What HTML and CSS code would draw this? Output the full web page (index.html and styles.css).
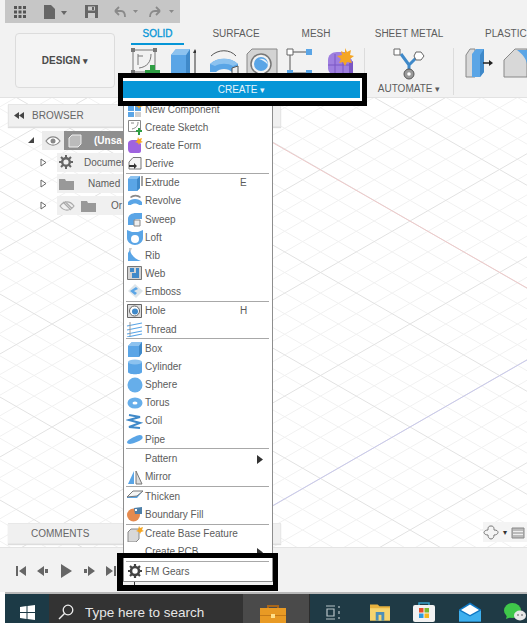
FILE: index.html
```html
<!DOCTYPE html>
<html lang="en">
<head>
<meta charset="utf-8">
<title>Fusion 360 Create menu</title>
<link rel="stylesheet" href="styles.css">
</head>
<body>
<div class="app">
  <header class="ribbon">
    <div class="quickbar">
      <svg class="qb-icon" width="16" height="14" viewBox="0 0 16 14"><path fill="#555" d="M2 1h3v3H2zM6.500 1h3v3h-3zM11 1h3v3h-3zM2 5.500h3v3H2zM6.500 5.500h3v3h-3zM11 5.500h3v3h-3zM2 10h3v3H2zM6.500 10h3v3h-3zM11 10h3v3h-3z"/></svg>
      <svg class="qb-icon qb-file" width="24" height="16" viewBox="0 0 24 16"><path fill="#666" d="M1 1h7l4 4v10H1z"/><path fill="#666" d="M18 7h6l-3 4z"/></svg>
      <svg class="qb-icon qb-save" width="15" height="15" viewBox="0 0 15 15"><path fill="#666" d="M1 1h13v13H1z"/><path fill="#ccc" d="M4 2.500h7v4H4zM4 9h7v5H4z"/><path fill="#666" d="M8 3h2v3H8z"/></svg>
      <svg class="qb-icon qb-undo" width="26" height="14" viewBox="0 0 26 14"><path fill="none" stroke="#8a8a8a" stroke-width="1.800" d="M2 6l4-4M2 6l4 4M2 6h6c3 0 4 2 4 6"/><path fill="#8a8a8a" d="M20 5h5l-2.500 3z"/></svg>
      <svg class="qb-icon qb-redo" width="27" height="14" viewBox="0 0 27 14"><path fill="none" stroke="#8a8a8a" stroke-width="1.800" d="M12 6L8 2M12 6l-4 4M12 6H7c-3 0-5 2-5 6"/><path fill="#8a8a8a" d="M21 5h5l-2.500 3z"/></svg>
    </div>
    <div class="ribbon-body">
      <div class="design-btn">DESIGN <span class="caret">▾</span></div>
      <div class="ribbon-main">
        <nav class="tabs">
          <span class="tab tab-solid">SOLID</span>
          <span class="tab tab-surface">SURFACE</span>
          <span class="tab tab-mesh">MESH</span>
          <span class="tab tab-sheet">SHEET METAL</span>
          <span class="tab tab-plastic">PLASTIC</span>
        </nav>
        <div class="tools">
          <svg class="tool t-sketch" width="30" height="30" viewBox="0 0 30 30"><path fill="none" stroke="#777" d="M2 2h22v22H2z"/><path fill="none" stroke="#777" d="M7 8h5M20 6c0 8-4 13-12 14M7 6v11"/><path fill="#777" d="M0 0h4v4H0zM22 0h4v4h-4zM0 22h4v4H0z"/><path fill="#2f9e44" d="M19 17h5v5h5v6h-5v5h-5v-5h-5v-6h5z"/></svg>
          <svg class="tool t-box" width="26" height="30" viewBox="0 0 26 30"><path fill="#5aa5e6" d="M1 7l5-6h14v24l-4 4H1z"/><path fill="#3f89c9" d="M16 7l4-6v24l-4 4z"/><path fill="#8cc2ef" d="M1 7l5-6h14l-4 6z"/><path stroke="#333" d="M25 4v22"/><path fill="#333" d="M25 1l2 4h-4z"/></svg>
          <svg class="tool t-rev" width="32" height="30" viewBox="0 0 32 30"><path fill="none" stroke="#555" d="M3 8c7-7 19-7 25 0"/><path fill="#5aa5e6" d="M2 16c7-7 21-7 28 0v8h-6c-4-4-12-4-16 0H2z"/><path fill="#8cc2ef" d="M2 16c7-7 21-7 28 0l-5 2c-5-3-13-3-18 0z"/><path fill="#eee" stroke="#555" d="M24 20l6-2v9l-6 2z"/></svg>
          <svg class="tool t-hole" width="32" height="30" viewBox="0 0 32 30"><path fill="#d3d3d3" stroke="#888" d="M1 6l5-5h25v26H1z"/><circle cx="15" cy="16" r="10" fill="#f2f2f2" stroke="#777" stroke-width="1.500"/><circle cx="15" cy="16" r="7" fill="#5aa5e6"/><path fill="#e8f2fa" d="M13 11a7 7 0 019 6c-3-4-6-5-9-6z"/></svg>
          <svg class="tool t-pts" width="28" height="30" viewBox="0 0 28 30"><path fill="none" stroke="#555" d="M7 4h14M4 7v17M7 25h14"/><path fill="#fff" stroke="#666" d="M1 1h6v6H1z"/><path fill="#5aa5e6" d="M20 1h6v6h-6zM1 22h6v6H1zM20 22h6v6h-6z"/></svg>
          <svg class="tool t-form" width="30" height="30" viewBox="0 0 30 30"><path fill="#9f7fe0" d="M3 12c0-5 4-8 9-8h8l7 8v14H8c-3 0-5-3-5-6z"/><path fill="none" stroke="#7a57c4" d="M3 17h22M10 6v22M18 6v22"/><path fill="#7a57c4" d="M24 15l4-2v12l-4 3z"/><path fill="#f5a623" d="M20 0l2 4 4-2-1 5 4 1-4 3 2 4-5-1-2 4-2-4-4 1 2-4-4-3 5-1-1-4 4 2z"/></svg>
          <span class="tool-div"></span>
          <div class="automate">
            <svg width="32" height="33" viewBox="0 0 32 33"><path fill="none" stroke="#3f89c9" stroke-width="3" d="M8 6l8 11 8-8M16 17v8"/><path fill="#fff" stroke="#666" d="M1 1h6v6H1z"/><path fill="#fff" stroke="#666" d="M23 4l5 0 3 4-3 4h-5l-2-4z"/><circle cx="16" cy="26" r="5" fill="#999" stroke="#555"/><circle cx="16" cy="26" r="1.800" fill="#fff"/></svg>
            <span class="auto-label">AUTOMATE <span class="caret">▾</span></span>
          </div>
          <span class="tool-div"></span>
          <svg class="tool t-plastic" width="28" height="30" viewBox="0 0 28 30"><path fill="#d8d8d8" stroke="#888" d="M1 29V7l4-6h5v28z"/><path fill="#5aa5e6" d="M7 29V6l4-5h8v23l-4 5z"/><path fill="#3f89c9" d="M15 7l4-6v23l-4 5z"/><path stroke="#222" stroke-width="1.500" d="M18 15h8"/><path fill="#222" d="M28 15l-4-3v6z"/></svg>
          <svg class="tool t-next" width="24" height="30" viewBox="0 0 24 30"><path fill="#d8d8d8" stroke="#888" d="M1 29V12L12 1h12v28z"/><path fill="#5aa5e6" d="M14 2h10v14c-1-6-5-10-10-14z"/></svg>
        </div>
      </div>
    </div>
  </header>

  <main class="canvas">
    <svg class="grid" viewBox="0 98 527 449" aria-hidden="true">
      <defs>
        <pattern id="minor" patternUnits="userSpaceOnUse" x="410" y="118" width="179" height="103">
          <path fill="none" stroke="#f1f1f1" stroke-width="1" d="M0 20.600L179 123.600M0 -82.400L179 20.600M0 41.200L179 144.200M0 -61.800L179 41.200M0 61.800L179 164.800M0 -41.200L179 61.800M0 82.400L179 185.400M0 -20.600L179 82.400M0 20.600L179 -82.400M0 123.600L179 20.600M0 41.200L179 -61.800M0 144.200L179 41.200M0 61.800L179 -41.200M0 164.800L179 61.800M0 82.400L179 -20.600M0 185.400L179 82.400"/>
        </pattern>
        <pattern id="major" patternUnits="userSpaceOnUse" x="410" y="118" width="179" height="103">
          <path fill="none" stroke="#e2e2e2" stroke-width="1" d="M0 0L179 103M0 103L179 0"/>
        </pattern>
      </defs>
      <rect x="0" y="98" width="527" height="449" fill="#fff"/>
      <rect x="0" y="98" width="527" height="449" fill="url(#minor)"/>
      <rect x="0" y="98" width="527" height="449" fill="url(#major)"/>
      <path fill="none" stroke="#eec9c9" stroke-width="1" d="M273 142.800L527 288"/>
      <path fill="none" stroke="#c9c9ec" stroke-width="1" d="M273 505.500L527 360"/>
    </svg>

    <section class="browser">
      <div class="browser-head"><svg width="10" height="7" viewBox="0 0 10 7"><path fill="#444" d="M5 0v7L0 3.500zM10 0v7L5 3.500z"/></svg><span>BROWSER</span></div>
      <div class="tree">
        <div class="tree-row row-root">
          <svg class="tri" width="7" height="7" viewBox="0 0 7 7"><path fill="#444" d="M6 0v6H0z"/></svg>
          <div class="node node-eye"><svg width="16" height="10" viewBox="0 0 16 10"><path fill="#fff" stroke="#888" stroke-width="1.200" d="M1 5c4-5.500 10-5.500 14 0-4 5.500-10 5.500-14 0z"/><circle cx="8" cy="5" r="2.500" fill="#888"/></svg></div>
          <div class="node node-root"><svg width="14" height="14" viewBox="0 0 14 14"><path fill="#bbb" stroke="#eee" d="M1 13V4l3-3h9v9l-3 3z"/></svg><span class="root-name">(Unsa</span></div>
        </div>
        <div class="tree-row">
          <svg class="tri" width="7" height="9" viewBox="0 0 7 9"><path fill="#fff" stroke="#666" d="M1 1l5 3.500L1 8z"/></svg>
          <div class="node node-item"><svg width="14" height="14" viewBox="0 0 14 14"><circle cx="7" cy="7" r="3.800" fill="none" stroke="#666" stroke-width="2.400"/><path stroke="#666" stroke-width="2" d="M7 0v3M7 11v3M0 7h3M11 7h3M2 2l2 2M10 10l2 2M2 12l2-2M10 4l2-2"/></svg><span class="label-doc">Documen</span></div>
        </div>
        <div class="tree-row">
          <svg class="tri" width="7" height="9" viewBox="0 0 7 9"><path fill="#fff" stroke="#666" d="M1 1l5 3.500L1 8z"/></svg>
          <div class="node node-item"><svg width="15" height="12" viewBox="0 0 15 12"><path fill="#999" d="M0 1h6l1 2h8v9H0z"/></svg><span class="label-named">Named</span></div>
        </div>
        <div class="tree-row">
          <svg class="tri" width="7" height="9" viewBox="0 0 7 9"><path fill="#fff" stroke="#666" d="M1 1l5 3.500L1 8z"/></svg>
          <div class="node node-item"><svg width="16" height="10" viewBox="0 0 16 10"><path fill="none" stroke="#aaa" stroke-width="1.200" d="M1 5c4-5.500 10-5.500 14 0-4 5.500-10 5.500-14 0zM4 1l8 8M6 0.500l7 7"/></svg><svg class="folder-2" width="15" height="12" viewBox="0 0 15 12"><path fill="#999" d="M0 1h6l1 2h8v9H0z"/></svg><span class="label-origin">Or</span></div>
        </div>
      </div>
    </section>

    <footer class="canvas-foot">
      <div class="comments">COMMENTS</div>
      <div class="view-tools">
        <svg width="16" height="15" viewBox="0 0 16 15"><path fill="none" stroke="#777" d="M8 1c3 0 3 2 3 4 3 0 4 1 4 2.500S13 10 11 10c0 2-1 4-3 4s-3-2-3-4c-2 0-4-1-4-2.500S3 5 5 5c0-2 0-4 3-4z"/></svg>
        <span class="mini-caret">▾</span>
        <svg class="cal" width="14" height="13" viewBox="0 0 14 13"><path fill="#bbb" stroke="#888" d="M1 2h12v10H1z"/><path fill="#eee" d="M2 5h10v1H2zM2 8h10v1H2z"/></svg>
      </div>
    </footer>
  </main>

  <section class="timeline">
    <svg width="12" height="12" viewBox="0 0 12 12"><path fill="#666" d="M1 1h2v10H1zM11 1v10L4 6z"/></svg>
    <svg class="tl-prev" width="14" height="12" viewBox="0 0 14 12"><path fill="#666" d="M8 1v10L1 6zM9 4h3v4H9z"/></svg>
    <svg class="tl-play" width="13" height="14" viewBox="0 0 13 14"><path fill="#666" d="M1 0l11 7-11 7z"/></svg>
    <svg class="tl-next" width="14" height="12" viewBox="0 0 14 12"><path fill="#666" d="M2 4h3v4H2zM6 1l7 5-7 5z"/></svg>
    <svg class="tl-last" width="12" height="12" viewBox="0 0 12 12"><path fill="#666" d="M1 1l7 5-7 5zM9 1h2v10H9z"/></svg>
  </section>

  <footer class="taskbar">
    <div class="start"><svg width="15" height="15" viewBox="0 0 15 15"><path fill="#fff" d="M0 2l6.500-1v6H0zM7.500 .9L15 0v7H7.500zM0 8h6.500v6L0 13zM7.500 8H15v7l-7.500-1z"/></svg></div>
    <div class="search">
      <svg width="16" height="16" viewBox="0 0 16 16"><circle cx="10" cy="6" r="4.800" fill="none" stroke="#eee" stroke-width="1.300"/><path stroke="#eee" stroke-width="1.500" d="M6.500 9.500L1 15"/></svg>
      <span>Type here to search</span>
    </div>
    <div class="active-app"><svg width="28" height="20" viewBox="0 0 28 20"><path fill="#a8661a" d="M8 2h12v3h-2V4h-8v1H8z"/><path fill="#e89a24" d="M1 5h26v17H1z"/><path fill="#c47a18" d="M1 12h26v1H1z"/><path fill="#ffe08a" d="M12 11h4v4h-4z"/></svg></div>
    <div class="tray">
      <svg width="16" height="15" viewBox="0 0 16 15"><path fill="none" stroke="#b8c4c8" stroke-width="1.200" d="M1 1h9M1 14h9M2 4h7v7H2zM14 1v2M14 6v3M14 12v2"/></svg>
      <svg class="tray-folder" width="20" height="18" viewBox="0 0 21 18"><path fill="#e8b23e" d="M0 1h8l2 2h11v15H0z"/><path fill="#f6d46e" d="M0 5h21v13H0z"/><path fill="#4d8fb8" d="M6 9h9v9H6z"/><path fill="#f6d46e" d="M9 12h3v6H9z"/></svg>
      <svg class="tray-store" width="22" height="20" viewBox="0 0 22 20"><path fill="none" stroke="#37a0c9" stroke-width="1.500" d="M6 4V1h10v3"/><rect x="0" y="3" width="22" height="17" rx="2" fill="#f2f2f2"/><path fill="#e74c2b" d="M6 6h4.500v4.500H6z"/><path fill="#7cb82f" d="M11.500 6H16v4.500h-4.500z"/><path fill="#2d9be0" d="M6 11.500h4.500V16H6z"/><path fill="#f5b81f" d="M11.500 11.500H16V16h-4.500z"/></svg>
      <svg class="tray-mail" width="22" height="20" viewBox="0 0 22 19"><path fill="#0f78c4" d="M11 0l11 7v12H0V7z"/><path fill="#3fb0ee" d="M0 8l11 6 11-6v11H0z"/><path fill="#fff" d="M2 7.500L11 2l9 5.500-9 5z"/></svg>
      <svg class="tray-chat" width="22" height="19" viewBox="0 0 22 19"><ellipse cx="8.500" cy="7.500" rx="8.500" ry="7.500" fill="#3fc74a"/><path fill="#3fc74a" d="M3 12l-1 4 5-2z"/><ellipse cx="16" cy="12.500" rx="6" ry="5" fill="#e8e8e8"/><circle cx="14" cy="12" r="1" fill="#888"/><circle cx="18" cy="12" r="1" fill="#888"/></svg>
    </div>
  </footer>

  <div class="menu">
    <div class="item"><svg class="ico" viewBox="0 0 18 16"><path fill="#5aa5e6" d="M2 5h6v5H2zM9 5h6v5H9zM2 11h6v5H2z"/><path fill="#cfcfcf" d="M9 11h6v5H9z"/><path fill="#f5a623" d="M12 0l1 2 3-1-1 3 2 1-3 1-1 2-1-2-3-1 2-1z"/></svg><span>New Component</span></div>
    <div class="item"><svg class="ico" viewBox="0 0 18 16"><path fill="none" stroke="#888" d="M2.500 1.500h12v11h-12z"/><path fill="none" stroke="#888" d="M5 4h3M12 3c0 4-2 6-6 7"/><path fill="#2f9e44" d="M12 9h2v2h2v2h-2v3h-2v-3h-2v-2h2z"/></svg><span>Create Sketch</span></div>
    <div class="item"><svg class="ico" viewBox="0 0 18 16"><path fill="#9f63df" d="M2 7c0-3 2-4 5-4h5l3 4v7c0 1-1 2-2 2H5c-2 0-3-2-3-4z"/><path fill="#f5a623" d="M12 0l1 2 3-1-1 3 2 1-3 1-1 2-1-2-3-1 2-1z"/></svg><span>Create Form</span></div>
    <div class="item"><svg class="ico" viewBox="0 0 18 16"><path fill="#f4f4f4" stroke="#777" d="M15 2.500H7L3 7v7h12z"/><path fill="#333" d="M3 10h5V8l3 3-3 3v-2H3z"/></svg><span>Derive</span></div>
    <div class="sep"></div>
    <div class="item"><svg class="ico" viewBox="0 0 18 16"><path fill="#5aa5e6" d="M2 4l3-3h9v12l-3 3H2z"/><path fill="#3f89c9" d="M11 4l3-3v12l-3 3z"/><path fill="#8cc2ef" d="M2 4l3-3h9l-3 3z"/><path stroke="#444" d="M16 1v10"/></svg><span>Extrude</span><span class="key">E</span></div>
    <div class="item"><svg class="ico" viewBox="0 0 18 16"><path fill="#8a8a8a" d="M4 4c3-3 8-3 11 0l-1 1c-3-2-6-2-9 0z"/><path fill="#5aa5e6" d="M2 9c3-4 11-4 14 0v3h-3c-2-2-6-2-8 0H2z"/></svg><span>Revolve</span></div>
    <div class="item"><svg class="ico" viewBox="0 0 18 16"><path fill="#5aa5e6" d="M2 8c0-4 4-6 8-6h6v6h-5c-2 0-3 1-3 3v3H2z"/><path fill="#eee" stroke="#888" d="M8 9h6v6H8z"/></svg><span>Sweep</span></div>
    <div class="item"><svg class="ico" viewBox="0 0 18 16"><path fill="#5aa5e6" d="M1 1l5 2h6l5-2v8c0 4-4 7-8 7s-8-3-8-7z"/><circle cx="9" cy="10" r="4" fill="#fff"/></svg><span>Loft</span></div>
    <div class="item"><svg class="ico" viewBox="0 0 18 16"><path fill="#c9c9c9" d="M3 1l3 0-3 7z"/><path fill="#5aa5e6" d="M4 3c1 5 5 9 11 11H2V6z"/></svg><span>Rib</span></div>
    <div class="item"><svg class="ico" viewBox="0 0 18 16"><path fill="#d3d3d3" stroke="#777" d="M1.500 1.500h14v13h-14z"/><path fill="#3f89c9" d="M4 3h4v4H4zM10 3h3v10h-3zM6 8h4v5H6z"/></svg><span>Web</span></div>
    <div class="item"><svg class="ico" viewBox="0 0 18 16"><path fill="#dde5ea" d="M9 1l8 7-7 7-8-7z"/><path fill="#5aa5e6" d="M10 4l2 2-4 2 3 2-2 2-5-4z"/></svg><span>Emboss</span></div>
    <div class="sep"></div>
    <div class="item"><svg class="ico" viewBox="0 0 18 16"><path fill="#ddd" stroke="#666" d="M1.500 1.500h14v13h-14z"/><circle cx="8.500" cy="8" r="5" fill="#fff" stroke="#666"/><circle cx="9" cy="8.500" r="3" fill="#3f89c9"/></svg><span>Hole</span><span class="key">H</span></div>
    <div class="item"><svg class="ico" viewBox="0 0 18 16"><path fill="none" stroke="#5aa5e6" stroke-width="1.200" d="M1 5l15-3M1 9l15-3M1 13l15-3M1 16l15-3"/><path fill="none" stroke="#999" d="M4 1v14"/></svg><span>Thread</span></div>
    <div class="sep"></div>
    <div class="item"><svg class="ico" viewBox="0 0 18 16"><path fill="#5aa5e6" d="M2 5l4-4h10v11l-3 4H2z"/><path fill="#8cc2ef" d="M2 5l4-4h10l-3 4z"/><path fill="#3f89c9" d="M13 5l3-4v11l-3 4z"/></svg><span>Box</span></div>
    <div class="item"><svg class="ico" viewBox="0 0 18 16"><path fill="#5aa5e6" d="M2 3v10c0 3 14 3 14 0V3z"/><ellipse cx="9" cy="3" rx="7" ry="2.500" fill="#8cc2ef"/></svg><span>Cylinder</span></div>
    <div class="item"><svg class="ico" viewBox="0 0 18 16"><circle cx="9" cy="8" r="7.500" fill="#66aeea"/></svg><span>Sphere</span></div>
    <div class="item"><svg class="ico" viewBox="0 0 18 16"><ellipse cx="9" cy="8" rx="7.500" ry="5.500" fill="#66aeea"/><ellipse cx="9" cy="8" rx="2.500" ry="1.500" fill="#fff"/></svg><span>Torus</span></div>
    <div class="item"><svg class="ico" viewBox="0 0 18 16"><path fill="none" stroke="#3f89c9" stroke-width="2" d="M3 2l11 2-11 3 11 3-11 4 11 1"/></svg><span>Coil</span></div>
    <div class="item"><svg class="ico" viewBox="0 0 18 16"><path fill="#5aa5e6" d="M1 11c0-2 10-7 13-7 3 0 3 3 2 4-2 2-10 5-12 5s-3-1-3-2z"/></svg><span>Pipe</span></div>
    <div class="sep"></div>
    <div class="item has-sub"><span class="ico-blank"></span><span>Pattern</span><svg class="sub" width="6" height="9" viewBox="0 0 6 9"><path fill="#333" d="M0 0l6 4.500L0 9z"/></svg></div>
    <div class="item"><svg class="ico" viewBox="0 0 18 16"><path fill="#5aa5e6" d="M8 2v13H2z"/><path fill="#ddd" stroke="#777" d="M10 2v13h6z"/></svg><span>Mirror</span></div>
    <div class="sep"></div>
    <div class="item"><svg class="ico" viewBox="0 0 18 16"><path fill="#5aa5e6" d="M1 9l6-6h10l-6 7H1z"/><path fill="#f4f4f4" stroke="#777" d="M1 9l6-6h10l-6 5z"/></svg><span>Thicken</span></div>
    <div class="item"><svg class="ico" viewBox="0 0 18 16"><circle cx="7.500" cy="9" r="6.500" fill="#e58a4e"/><path fill="#4d7fa8" d="M8 2l8-1v7H9z"/><path fill="#fff" d="M9 3h2v2H9z"/></svg><span>Boundary Fill</span></div>
    <div class="sep"></div>
    <div class="item"><svg class="ico" viewBox="0 0 18 16"><path fill="#d8d8d8" stroke="#888" d="M2 6l3-3h8v10l-3 3H2z"/><path fill="#f5a623" d="M13 0l1 2 3-1-1 3 2 1-3 1-1 2-1-2-3-1 2-1z"/></svg><span>Create Base Feature</span></div>
    <div class="item has-sub"><span class="ico-blank"></span><span>Create PCB</span><svg class="sub" width="6" height="9" viewBox="0 0 6 9"><path fill="#333" d="M0 0l6 4.500L0 9z"/></svg></div>
    <div class="sep"></div>
    <div class="item"><svg class="ico" viewBox="0 0 18 16"><circle cx="9" cy="8" r="4" fill="none" stroke="#444" stroke-width="2.600"/><path stroke="#444" stroke-width="2.200" d="M9 1v3M9 12v3M2 8h3M13 8h3M4 3l2 2M12 11l2 2M4 13l2-2M12 5l2-2"/></svg><span>FM Gears</span></div>
  </div>

  <div class="callout callout-create"><div class="create-bar">CREATE <span class="caret">▾</span></div></div>
  <div class="callout callout-gears"><span class="tick"></span></div>
</div>
</body>
</html>
```

FILE: styles.css
```css
* { box-sizing: border-box; }
html, body { margin: 0; padding: 0; }
body { width: 527px; height: 623px; overflow: hidden; background: #fff; font-family: "Liberation Sans", Arial, sans-serif; font-size: 10px; color: #5c5c5c; }
svg { display: block; flex: none; }
.app { position: relative; width: 527px; height: 623px; display: flex; flex-direction: column; }

/* ribbon */
.ribbon { height: 98px; background: #f2f2f2; border-bottom: 1px solid #e2e2e2; flex: none; }
.quickbar { width: 175px; height: 23px; margin-left: 5px; background: #c6c6c6; display: flex; align-items: center; padding-left: 7px; }
.qb-file { margin-left: 15px; }
.qb-save { margin-left: 17px; }
.qb-undo { margin-left: 14px; }
.qb-redo { margin-left: 9px; }
.ribbon-body { display: flex; padding-left: 15px; height: 74px; }
.design-btn { width: 100px; height: 55px; margin-top: 10px; border: 1px solid #dcdcdc; border-radius: 4px; display: flex; align-items: center; justify-content: center; gap: 3px; font-weight: bold; color: #4a4a4a; background: #f4f4f4; }
.caret { font-size: 9px; }
.ribbon-main { margin-left: 16px; flex: 1; min-width: 0; }
.tabs { display: flex; height: 22px; padding-top: 5px; line-height: 12px; white-space: nowrap; }
.tab { display: block; text-align: center; flex: none; }
.tab-solid { width: 53px; height: 17px; color: #0696d7; border-bottom: 2px solid #0696d7; -webkit-text-stroke: .3px #0696d7; }
.tab-surface { width: 70px; margin-left: 17px; }
.tab-mesh { width: 50px; margin-left: 20px; }
.tab-sheet { width: 80px; margin-left: 28px; }
.tab-plastic { margin-left: 36px; }
.tools { display: flex; align-items: flex-start; padding-top: 3px; }
.t-box { margin-left: 9px; }
.t-rev { margin-left: 12px; }
.t-hole { margin-left: 6px; }
.t-pts { margin-left: 8px; }
.t-form { margin-left: 11px; }
.tool-div { width: 1px; height: 47px; background: #dcdcdc; flex: none; }
.t-form + .tool-div { margin-left: 9px; }
.automate { width: 89px; display: flex; flex-direction: column; align-items: center; }
.auto-label { margin-top: 2px; line-height: 12px; white-space: nowrap; }
.t-plastic { margin-left: 11px; }
.t-next { margin-left: 10px; }

/* canvas */
.canvas { position: relative; height: 449px; flex: none; display: flex; flex-direction: column; padding: 6px 0 3px 8px; overflow: hidden; }
.grid { position: absolute; left: 0; top: 0; width: 527px; height: 449px; }
.browser { position: relative; width: 273px; }
.browser-head { height: 23px; background: #f0f0f0; border: 1px solid #e6e6e6; display: flex; align-items: center; gap: 8px; padding-left: 5px; color: #666; box-shadow: 0 1px 1px #ddd; }
.tree { padding-top: 3px; width: 115px; }
.tree-row { height: 21.600px; display: flex; align-items: center; padding-left: 32px; }
.tree-row .tri { margin-right: 10px; }
.row-root { padding-left: 20px; }
.row-root .tri { margin-right: 7px; }
.node { height: 19px; display: flex; align-items: center; white-space: nowrap; }
.node-eye { background: #ececec; width: 22px; padding-left: 3px; flex: none; }
.node-root { background: #8f8f8f; flex: 1; padding-left: 4px; color: #fff; font-weight: bold; }
.root-name { margin-left: 12px; }
.node-item { background: #f0f0f0; flex: 1; padding-left: 2px; }
.label-doc { margin-left: 11px; }
.label-named { margin-left: 14px; }
.label-origin { margin-left: 15px; }
.folder-2 { margin-left: 6px; }
.canvas-foot { position: relative; margin-top: auto; display: flex; justify-content: space-between; align-items: flex-start; }
.comments { width: 273px; height: 21px; line-height: 20px; padding-left: 23px; background: #f0f0f0; border: 1px solid #e8e8e8; border-left: 0; color: #666; box-shadow: 0 1px 1px #ddd; }
.view-tools { width: 44px; height: 20px; background: #f4f4f4; display: flex; align-items: center; margin-top: -1px; }
.mini-caret { font-size: 8px; margin-left: 4px; color: #333; }
.cal { margin-left: 4px; }

/* timeline */
.timeline { height: 45px; flex: none; background: #f2f2f2; border-top: 1px solid #e4e4e4; display: flex; align-items: center; padding: 2px 0 0 15px; }
.tl-prev { margin-left: 9px; }
.tl-play { margin-left: 10px; }
.tl-next { margin-left: 9px; }
.tl-last { margin-left: 9px; }

/* taskbar */
.taskbar { height: 31px; flex: none; margin-left: 5px; border-top: 2px solid #b9b9b9; display: flex; background: #1f3a45; color: #e6e6e6; }
.start { width: 44px; background: #1c3a46; display: flex; align-items: center; justify-content: center; padding-top: 7px; }
.search { width: 194px; background: #333; display: flex; align-items: center; gap: 11px; padding: 7px 0 0 9px; font-size: 13.500px; white-space: nowrap; }
.active-app { width: 67px; background: #4a4a4a; display: flex; align-items: flex-end; padding-left: 16px; border-right: 1px solid #2c2c2c; }
.tray { flex: 1; display: flex; align-items: center; padding: 7px 0 0 15px; }
.tray-folder { margin-left: 29px; }
.tray-store { margin-left: 23px; }
.tray-mail { margin-left: 24px; }
.tray-chat { margin-left: 23px; }

/* menu */
.menu { position: absolute; left: 123px; top: 99px; width: 150px; height: 483px; background: #fff; border: 1px solid #8e8e8e; border-top: 0; padding: 1px 3px 0 2px; }
.item { height: 18.100px; display: flex; align-items: center; gap: 1px; color: #5c5c5c; white-space: nowrap; position: relative; }
.ico { width: 18px; height: 16px; flex: none; }
.ico-blank { width: 18px; height: 16px; flex: none; }
.key { position: absolute; left: 114px; }
.sub { position: absolute; left: 131px; top: 5px; }
.sep { height: 1px; margin: .225px 0; background: #a8a8a8; }

/* annotation boxes */
.callout { position: absolute; border: 5px solid #000; }
.callout-create { left: 118px; top: 73px; width: 249px; height: 33px; background: #fff; padding: 3px 2px 0 0; }
.create-bar { height: 17px; background: #0696d7; color: #e8f4fb; text-align: center; line-height: 17px; }
.callout-gears { left: 117px; top: 553px; width: 161px; height: 38px; border-width: 5px 5px 6px 6px; }
.tick { position: absolute; left: 11px; bottom: 0; width: 1px; height: 3px; background: #333; }
```
